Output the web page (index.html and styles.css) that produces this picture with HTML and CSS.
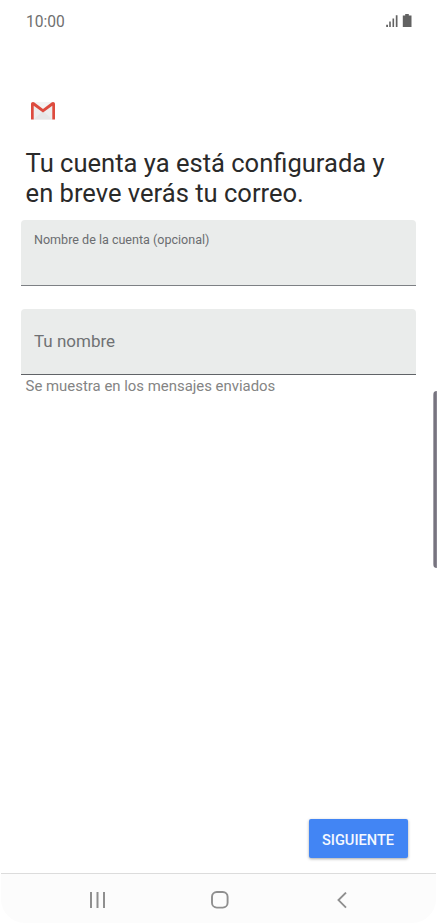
FILE: index.html
```html
<!DOCTYPE html>
<html lang="es">
<head>
    <meta charset="UTF-8">
    <meta name="viewport" content="width=device-width, initial-scale=1.0">
    <title>Gmail</title>
    <link rel="stylesheet" href="styles.css">
</head>
<body>
    <div class="screen">
        <header class="status">
            <span class="time">10:00</span>
            <svg class="status-icons" width="26" height="14" viewBox="0 0 26 14" fill="#626262">
                <path d="M.2 10.800h1.800V13H.2zM3.200 7.600h1.600V13H3.200zM6.500 4.400h1.600V13H6.500zM9.800 1.200h1.700V13H9.800z"/>
                <path d="M19.200 0h3.600v1.400h2.700V13h-8.700V1.400h2.400z"/>
            </svg>
        </header>

        <main class="content">
            <svg class="logo" width="24" height="18" viewBox="0 0 24 18">
                <path d="M1.500 0h21v17.500h-21z" fill="#ededed"/>
                <path d="M2.500 17.500L12 9l9.500 8.500z" fill="#e6e6e6"/>
                <path d="M3 0h18l-9 7z" fill="#f3f3f3"/>
                <path d="M0 2C0 .8.8 0 2 0c.5 0 1 .2 1.400.5L12 7l8.600-6.500C21 .2 21.500 0 22 0c1.200 0 2 .8 2 2v15.500h-2.700V3.800L12 10.600 2.700 3.800v13.700H0z" fill="#dd4b3e"/>
            </svg>
            <h1 class="title">Tu cuenta ya está configurada y<br>en breve verás tu correo.</h1>

            <form class="form">
                <label class="field">
                    <span class="label-small">Nombre de la cuenta (opcional)</span>
                    <input type="text">
                </label>
                <label class="field field-name">
                    <input type="text" placeholder="Tu nombre">
                </label>
                <p class="hint">Se muestra en los mensajes enviados</p>
            </form>

            <button class="next">SIGUIENTE</button>
        </main>

        <nav class="navbar">
            <svg width="16" height="17" viewBox="0 0 16 17" fill="none" stroke="#8f8f8f" stroke-width="2">
                <path d="M1 0v16M7.500 0v16M14 0v16"/>
            </svg>
            <svg class="home" width="18" height="18" viewBox="0 0 18 18" fill="none" stroke="#8f8f8f" stroke-width="1.900">
                <rect x="1" y="1" width="15.600" height="15.600" rx="4.800"/>
            </svg>
            <svg width="10" height="17" viewBox="0 0 10 17" fill="none" stroke="#8f8f8f" stroke-width="1.900">
                <path d="M9 .6L1.500 8.100 9 15.600"/>
            </svg>
        </nav>

        <div class="edge-handle"></div>
    </div>
</body>
</html>
```

FILE: styles.css
```css
body {
    margin: 0;
    font-family: Roboto, sans-serif;
    background-color: #fff;
}

.screen {
    position: relative;
    display: flex;
    flex-direction: column;
    height: 924px;
    overflow: hidden;
}

.status {
    display: flex;
    justify-content: space-between;
    align-items: center;
    height: 42px;
    padding: 0 25px 0 26px;
}

.time {
    padding-top: 2px;
    font-size: 15.6px;
    color: #6f6f6f;
}

.content {
    flex: 1;
    display: flex;
    flex-direction: column;
    padding: 60px 21px 15px;
}

.logo {
    margin-left: 9.5px;
}

.title {
    margin: 28px 0 0 4.6px;
    font-size: 25.55px;
    font-weight: 400;
    line-height: 30px;
    color: #2a2a2a;
    white-space: nowrap;
}

.form {
    margin-top: 12px;
}

.field {
    display: flex;
    flex-direction: column;
    box-sizing: border-box;
    height: 66px;
    padding: 12px 13px 0;
    background-color: #eaeceb;
    border-bottom: 1px solid #7d8084;
    border-radius: 4px 4px 0 0;
}

.field input {
    width: 100%;
    padding: 0;
    border: none;
    background: none;
    font-family: inherit;
    font-size: 17px;
    outline: none;
}

.field input::placeholder {
    color: #6f7174;
    opacity: 1;
}

.label-small {
    font-size: 12.55px;
    line-height: 16px;
    color: #6b6d70;
}

.field-name {
    justify-content: center;
    margin-top: 23px;
    padding: 0 13px 1px;
    border-bottom-color: #606367;
}

.hint {
    margin: 1px 0 0 4.6px;
    font-size: 14.92px;
    line-height: 21px;
    color: #848484;
}

.next {
    align-self: flex-end;
    width: 99px;
    height: 39px;
    margin: auto 8.5px 0 0;
    padding: 2px 0 0;
    border: none;
    border-radius: 2px;
    background-color: #4285f4;
    box-shadow: 0 1px 3px rgba(0, 0, 0, 0.35);
    font-family: inherit;
    font-size: 14.6px;
    font-weight: 500;
    color: #f4f8ff;
}

.navbar {
    display: flex;
    justify-content: space-between;
    align-items: center;
    height: 50px;
    margin: 0 1px 1px;
    padding: 3px 89px 0 88.5px;
    box-sizing: border-box;
    border-top: 1px solid #dcdcdc;
    border-radius: 0 0 24px 24px;
    background-color: #fcfcfc;
}

.home {
    margin-right: 3px;
}

/* edge panel handle */
.edge-handle {
    position: absolute;
    top: 391px;
    right: 0;
    width: 4px;
    height: 177px;
    border-radius: 4px 0 0 4px;
    background: linear-gradient(to right, #bbb9c0 0, #77747f 1.5px, #77747f 3px, #9d9aa6 4px);
}
```
